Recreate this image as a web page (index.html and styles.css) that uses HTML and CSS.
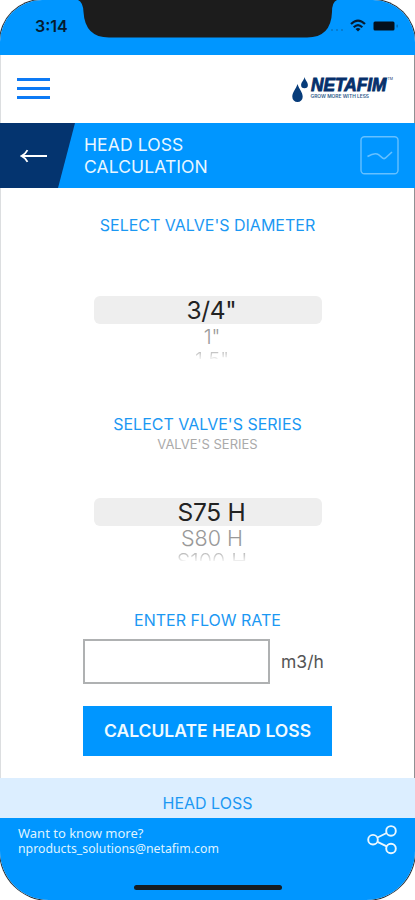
FILE: index.html
```html
<!DOCTYPE html>
<html lang="en">
<head>
    <meta charset="UTF-8">
    <meta name="viewport" content="width=device-width, initial-scale=1.0">
    <title>Head Loss Calculation</title>
    <link rel="stylesheet" href="styles.css">
</head>
<body>
    <div class="phone">
        <div class="status-bar">
            <span class="time">3:14</span>
            <svg class="notch" width="260" height="39" viewBox="0 0 260 39">
                <path d="M0 0 Q5 2 5.500 12 Q7 37.500 31 37.500 H229 Q253 37.500 254 12 Q254 2 259 0 Z" fill="#1c1c1c"/>
            </svg>
            <div class="status-icons">
                <svg width="14" height="4" viewBox="0 0 14 4" fill="#0875c4">
                    <circle cx="2" cy="2" r="1"/><circle cx="7" cy="2" r="1"/><circle cx="12" cy="2" r="1"/>
                </svg>
                <svg width="16" height="13" viewBox="0 0 16 13" fill="none" stroke="#061b30" stroke-width="2.200">
                    <path d="M1 5 Q8 -2 15 5"/>
                    <path d="M3.700 8.200 Q8 3.900 12.300 8.200"/>
                    <path d="M5.500 10 Q8 7.800 10.500 10 L8 12.500 Z" fill="#061b30" stroke="none"/>
                </svg>
                <svg width="26" height="10" viewBox="0 0 26 10" fill="#04101c">
                    <rect x="0.5" y="0.5" width="21" height="9" rx="1.500"/>
                    <rect x="23.500" y="3.500" width="1.300" height="3" rx="0.600" fill="#0666ad"/>
                </svg>
            </div>
        </div>

        <header class="header">
            <div class="menu-btn">
                <span></span>
                <span></span>
                <span></span>
            </div>
            <svg class="logo" width="104" height="30" viewBox="0 0 104 30">
                <path d="M7.500 8 C6 13 2.300 16 2.300 20.800 A5.200 5.300 0 0 0 12.700 20.800 C12.700 16 9 13 7.500 8 Z" fill="#073c7a"/>
                <path d="M14.500 1 C14 4.500 11.100 6 11.100 9 A3.400 3.200 0 0 0 17.900 9 C17.900 6 15.300 4.500 14.500 1 Z" fill="#073c7a"/>
                <text class="logo-name" x="21" y="14.700" textLength="75.500" lengthAdjust="spacingAndGlyphs">NETAFIM</text>
                <text class="logo-tm" x="97.500" y="4">TM</text>
                <text class="logo-slogan" x="20.500" y="22.300" textLength="58.500" lengthAdjust="spacingAndGlyphs">GROW MORE WITH LESS</text>
            </svg>
        </header>

        <div class="title-bar">
            <div class="back-btn">
                <svg width="28" height="14" viewBox="0 0 28 14" fill="none" stroke="#ffffff" stroke-width="1.800">
                    <path d="M1.500 7 H27 M7.500 1.200 Q5.500 5 1.500 7 Q5.500 9 7.500 12.800"/>
                </svg>
            </div>
            <h1>HEAD LOSS<br>CALCULATION</h1>
            <svg class="chart-icon" width="39" height="39" viewBox="0 0 39 39" fill="none" stroke="#66c0ff">
                <rect x="1" y="0.800" width="37" height="37" rx="3.500" stroke-width="1.400"/>
                <path d="M7.500 20.500 Q15 16 18.500 18.700 L23 22.300 Q24.500 23.200 26 21.500 L32 16" stroke-width="1.600"/>
            </svg>
        </div>

        <main class="content">
            <h2 class="diameter-title">SELECT VALVE'S DIAMETER</h2>
            <div class="picker">
                <div class="selected">3/4"</div>
                <div class="option">1"</div>
                <div class="option faded">1.5"</div>
            </div>

            <h2 class="series-title">SELECT VALVE'S SERIES</h2>
            <p class="subtitle">VALVE'S SERIES</p>
            <div class="picker picker-series">
                <div class="selected">S75 H</div>
                <div class="option">S80 H</div>
                <div class="option faded">S100 H</div>
            </div>

            <h2 class="flow-title">ENTER FLOW RATE</h2>
            <div class="flow-row">
                <input type="text" class="flow-input" aria-label="Flow rate">
                <span class="unit">m3/h</span>
            </div>
            <button class="calculate-btn">CALCULATE HEAD LOSS</button>
        </main>

        <div class="result">HEAD LOSS</div>

        <footer class="footer">
            <div class="contact">
                <p>Want to know more?</p>
                <p class="email">nproducts_solutions@netafim.com</p>
            </div>
            <svg class="share-icon" width="33" height="32" viewBox="0 0 33 32" fill="none" stroke="#e9f7ff" stroke-width="1.900">
                <circle cx="6" cy="14.700" r="4.800"/>
                <circle cx="24" cy="5.900" r="4.800"/>
                <circle cx="24" cy="23.500" r="4.800"/>
                <path d="M10.500 12.500 L19.700 8 M10.500 16.900 L19.700 21.400"/>
            </svg>
            <div class="home-indicator"></div>
        </footer>
    </div>
</body>
</html>
```

FILE: styles.css
```css
* {
    box-sizing: border-box;
}

body {
    margin: 0;
    background-color: #ffffff;
    font-family: Inter, "Liberation Sans", sans-serif;
}

h1, h2, p {
    margin: 0;
    font-weight: normal;
}

.phone {
    display: flex;
    flex-direction: column;
    width: 415px;
    height: 900px;
    border-radius: 42px 42px 49px 49px;
    box-shadow: 0 0 0 1px #2a3036;
    overflow: hidden;
    background-color: #ffffff;
}

.status-bar {
    position: relative;
    display: flex;
    justify-content: space-between;
    flex: none;
    height: 55px;
    padding: 17px 17px 0 35px;
    background-color: #0096ff;
}

.time {
    font-size: 16px;
    line-height: 18px;
    font-weight: 600;
    color: #061b30;
}

.notch {
    position: absolute;
    top: 0;
    left: 78px;
}

.status-icons {
    display: flex;
    align-items: flex-start;
    gap: 6px;
}

.status-icons svg:first-child {
    margin-top: 11px;
}

.status-icons svg:nth-child(2) {
    margin-top: 2px;
}

.status-icons svg:last-child {
    margin: 4px -1px 0 1px;
}

.header {
    display: flex;
    justify-content: space-between;
    flex: none;
    height: 68px;
    padding: 21px 20px 0 16px;
    border-left: 1px solid #dcdee0;
    border-right: 1px solid #8f9194;
}

.menu-btn {
    display: flex;
    flex-direction: column;
    gap: 6px;
    padding-top: 2px;
}

.menu-btn span {
    width: 33px;
    height: 3px;
    background-color: #0d7af5;
}

.logo-name {
    font-family: "Liberation Sans", sans-serif;
    font-size: 18.5px;
    font-weight: bold;
    font-style: italic;
    fill: #06306b;
    stroke: #06306b;
    stroke-width: 0.9px;
}

.logo-tm {
    font-size: 3.5px;
    fill: #06306b;
}

.logo-slogan {
    font-size: 5px;
    font-weight: 600;
    fill: #315b8c;
}

.title-bar {
    display: flex;
    flex: none;
    height: 65px;
    padding-right: 16px;
    background-color: #0096ff;
}

.back-btn {
    display: flex;
    align-items: center;
    width: 75px;
    padding-left: 20px;
    background-color: #04346f;
    clip-path: polygon(0 0, 100% 0, 58px 100%, 0 100%);
}

.title-bar h1 {
    flex: 1;
    padding: 11px 0 0 9px;
    font-size: 17.5px;
    line-height: 22px;
    letter-spacing: 0.1px;
    color: #e9f6ff;
}

.chart-icon {
    margin-top: 13px;
}

.content {
    display: flex;
    flex-direction: column;
    align-items: center;
    flex: none;
    height: 590px;
    border-left: 1px solid #dcdee0;
    border-right: 1px solid #8f9194;
}

h2 {
    font-size: 16px;
    line-height: 20px;
    color: #1b98f3;
}

.diameter-title {
    margin-top: 27px;
}

.picker {
    width: 228px;
    height: 63px;
    margin-top: 61px;
    overflow: hidden;
    text-align: center;
}

.picker .selected {
    height: 28px;
    padding-left: 8px;
    border-radius: 6px;
    background-color: #eeeeee;
    font-size: 24.5px;
    line-height: 29px;
    letter-spacing: -0.3px;
    color: #222222;
}

.picker .option {
    height: 26px;
    padding-left: 9px;
    font-size: 20px;
    font-weight: 300;
    line-height: 26px;
    color: #999999;
}

.picker .faded {
    height: 9px;
    line-height: 20px;
    color: #b4b4b4;
    -webkit-mask-image: linear-gradient(#000000, rgba(0, 0, 0, 0.2));
    mask-image: linear-gradient(#000000, rgba(0, 0, 0, 0.2));
}

.series-title {
    margin-top: 55px;
}

.subtitle {
    font-size: 13px;
    line-height: 20px;
    color: #aaaaaa;
}

.picker-series {
    margin-top: 44px;
}

.picker-series .option {
    font-size: 21.5px;
    line-height: 24px;
}

.picker-series .faded {
    line-height: 19px;
}

.flow-title {
    margin-top: 49px;
}

.flow-row {
    display: flex;
    align-items: center;
    gap: 11px;
    width: 249px;
    margin-top: 9px;
}

.flow-input {
    width: 187px;
    height: 45px;
    border: 2px solid #afb1b2;
    background-color: #ffffff;
}

.unit {
    font-size: 17.5px;
    color: #555555;
}

.calculate-btn {
    width: 249px;
    height: 50px;
    margin-top: 22px;
    padding: 0 0 2px;
    border: none;
    background-color: #0096ff;
    color: #effaff;
    font-family: inherit;
    font-size: 17.5px;
    font-weight: 600;
}

.result {
    flex: none;
    height: 40px;
    padding-top: 15px;
    background-color: #dceeff;
    text-align: center;
    font-size: 16px;
    line-height: 20px;
    color: #1b98f3;
}

.footer {
    position: relative;
    display: flex;
    justify-content: space-between;
    flex: 1;
    padding: 7px 15px 0 18px;
    background-color: #0096ff;
}

.contact p {
    font-family: "Noto Sans", sans-serif;
    font-size: 13px;
    line-height: 16px;
    color: #dff3ff;
}

.contact .email {
    font-size: 12.3px;
}

.home-indicator {
    position: absolute;
    left: 134px;
    bottom: 10px;
    width: 148px;
    height: 5px;
    border-radius: 3px;
    background-color: #151c22;
}
```
